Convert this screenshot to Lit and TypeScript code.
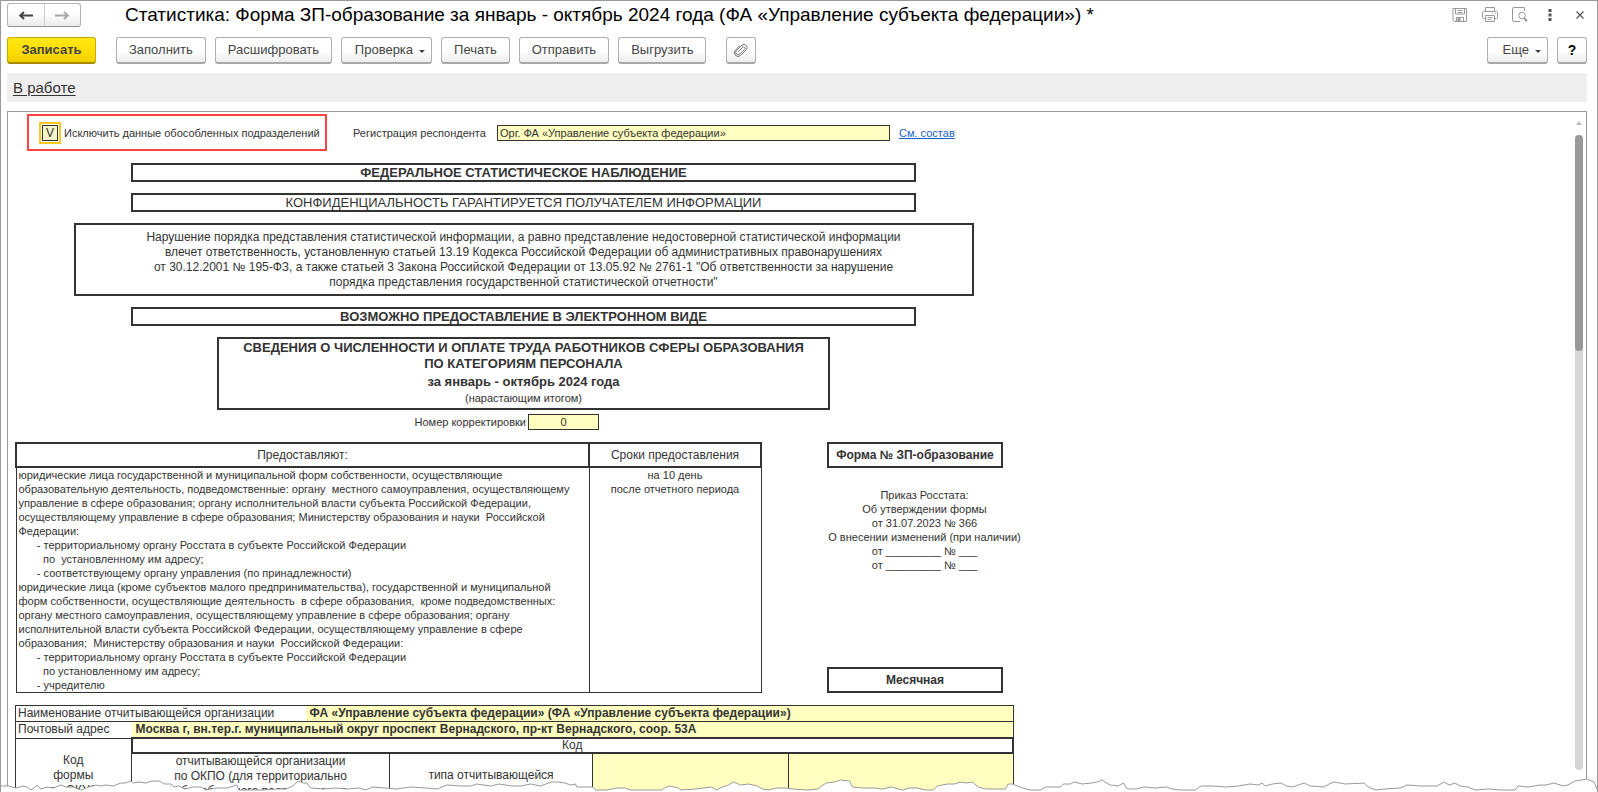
import { LitElement, html, css, svg } from "lit";
import { customElement, state } from "lit/decorators.js";

const TEAR =
  "0,7 8,7 15,9 22,7 26,8 30,11 33,9 36,6 40,10 46,8 52,9 60,6 65,8 72,8 80,11 88,8 95,6 99,7 105,6 112,7 120,4 124,4 130,2 132,4 138,3 145,4 151,2 158,2 164,5 170,5 173,8 178,7 184,10 192,8 200,8 205,11 215,9 226,9 236,6 238,11 262,11 275,10 285,10 292,7 297,2 303,4 306,4 310,9 322,10 335,9 346,10 358,9 365,11 372,8 384,9 395,10 410,8 425,9 437,10 446,6 460,7 470,7 476,5 483,6 490,7 498,5 505,6 512,7 520,7 530,5 540,7 545,5 551,3 558,3 564,4 570,6 575,5 576,8 592,8 595,11 606,11 616,9 624,9 630,11 661,11 664,9 669,7 678,9 680,11 695,10 703,9 711,8 716,11 722,8 728,6 733,3 740,6 748,5 757,7 762,10 768,11 776,9 785,9 792,10 807,11 818,10 821,7 826,4 834,3 840,1 849,2 852,8 862,9 874,9 882,10 891,8 902,11 909,9 917,9 925,11 933,11 937,7 947,5 954,5 960,3 966,4 972,3 978,8 985,10 993,10 1005,10 1008,5 1012,5 1022,9 1030,11 1040,11 1045,8 1053,8 1060,8 1063,5 1070,5 1074,3 1082,5 1091,4 1097,3 1102,1 1106,4 1110,6 1118,7 1123,4 1126,9 1129,10 1136,10 1144,8 1155,9 1166,8 1172,10 1180,11 1195,11 1201,7 1212,7 1226,8 1238,7 1250,5 1258,6 1262,4 1265,7 1272,5 1281,4 1286,7 1292,8 1298,6 1304,4 1310,7 1324,8 1329,5 1334,3 1345,5 1364,4 1367,7 1370,9 1376,11 1384,10 1400,9 1407,6 1420,7 1437,7 1444,3 1449,6 1455,4 1460,7 1468,8 1475,11 1489,10 1500,11 1515,11 1518,7 1528,8 1540,6 1546,6 1554,4 1563,7 1568,6 1575,2 1587,0 1594,3 1597,10";

const PROVIDERS = [
  "юридические лица государственной и муниципальной форм собственности, осуществляющие",
  "образовательную деятельность, подведомственные: органу  местного самоуправления, осуществляющему",
  "управление в сфере образования; органу исполнительной власти субъекта Российской Федерации,",
  "осуществляющему управление в сфере образования; Министерству образования и науки  Российской",
  "Федерации:",
  "      - территориальному органу Росстата в субъекте Российской Федерации",
  "        по  установленному им адресу;",
  "      - соответствующему органу управления (по принадлежности)",
  "юридические лица (кроме субъектов малого предпринимательства), государственной и муниципальной",
  "форм собственности, осуществляющие деятельность  в сфере образования,  кроме подведомственных:",
  "органу местного самоуправления, осуществляющему управление в сфере образования; органу",
  "исполнительной власти субъекта Российской Федерации, осуществляющему управление в сфере",
  "образования;  Министерству образования и науки  Российской Федерации:",
  "      - территориальному органу Росстата в субъекте Российской Федерации",
  "        по установленному им адресу;",
  "      - учредителю",
].join("\n");

const NOTICE = [
  "Нарушение порядка представления статистической информации, а равно представление недостоверной статистической информации",
  "влечет ответственность, установленную статьей 13.19 Кодекса Российской Федерации об административных правонарушениях",
  "от 30.12.2001 № 195-ФЗ, а также статьей 3 Закона Российской Федерации от 13.05.92 № 2761-1 \"Об ответственности за нарушение",
  "порядка представления государственной статистической отчетности\"",
].join("\n");

const ORDER = [
  "Приказ Росстата:",
  "Об утверждении формы",
  "от 31.07.2023 № 366",
  "О внесении изменений (при наличии)",
  "от _________ № ___",
  "от _________ № ___",
].join("\n");

const icon = (body: unknown, w = 18, h = 18) =>
  html`<svg width=${w} height=${h} viewBox="0 0 ${w} ${h}" fill="none" stroke="currentColor" aria-hidden="true">${body}</svg>`;

@customElement("title-bar")
export class TitleBar extends LitElement {
  static styles = css`
    :host { display: flex; align-items: center; height: 28px; }
    .nav { display: flex; flex: none; width: 74px; height: 24px; box-sizing: border-box; border: 1px solid #b4b4b4; border-bottom-color: #909090; border-radius: 3px; background: linear-gradient(#fff 40%, #ececec); }
    .nav button { flex: 1; border: 0; padding: 0; background: none; color: #444; display: grid; place-items: center; }
    .nav button + button { border-left: 1px solid #ccc; color: #aaa; }
    h1 { flex: 1; margin: 0 0 0 44px; font: 400 19px/24px "Liberation Sans", Arial, sans-serif; color: #000; white-space: nowrap; }
    .tools { display: flex; gap: 12px; color: #999; margin-right: -2px; }
    .tools button { width: 18px; height: 24px; padding: 0; border: 0; background: none; color: inherit; display: grid; place-items: center; }
    .tools .dark { color: #555; }
  `;
  render() {
    return html`
      <div class="nav">
        <button aria-label="Назад">${icon(svg`<path d="M2 5.5h13M6 2 2.2 5.5 6 9" stroke-width="2"/>`, 16, 11)}</button>
        <button aria-label="Вперед">${icon(svg`<path d="M1 5.5h13M10 2l3.8 3.5L10 9" stroke-width="2"/>`, 16, 11)}</button>
      </div>
      <h1>Статистика: Форма ЗП-образование за январь - октябрь 2024 года (ФА «Управление субъекта федерации») *</h1>
      <div class="tools">
        <button aria-label="Сохранить">${icon(svg`<path d="M2 2.5h13.5v13H3.5l-1.500-1.500zM4.500 2.500v5.500h9V2.500M6.500 4.500h5M6.500 6.500h5M5.500 15.500v-4h7v4"/><path d="M7 12.500h2v3H7z" fill="currentColor"/>`)}</button>
        <button aria-label="Печать">${icon(svg`<path d="M4.500 5.500v-4h9v4M4 12.500H2.500a1 1 0 0 1-1-1v-5a1 1 0 0 1 1-1h13a1 1 0 0 1 1 1v5a1 1 0 0 1-1 1H14M4.500 9.500h9v6h-9zM6.500 11.500h5M6.500 13.500h4M11 7.500h1M14 7.500h1"/>`)}</button>
        <button aria-label="Просмотр">${icon(svg`<path d="M9 15.500H3a1.500 1.500 0 0 1-1.500-1.500V3A1.500 1.500 0 0 1 3 1.500h10.500V5"/><circle cx="11" cy="9.500" r="3.300"/><path d="m13 12 3 3.200" stroke-width="2"/>`)}</button>
        <button class="dark" aria-label="Меню">${icon(svg`<path d="M7.500 3h3v3h-3zM7.500 7.500h3v3h-3zM7.500 12h3v3h-3z" fill="currentColor" stroke="none"/>`)}</button>
        <button class="dark" aria-label="Закрыть">${icon(svg`<path d="m5.500 5.500 7 7M12.500 5.500l-7 7" stroke-width="1.200"/>`)}</button>
      </div>
    `;
  }
}

@customElement("command-bar")
export class CommandBar extends LitElement {
  static styles = css`
    :host { display: flex; align-items: center; gap: 9px; }
    button { height: 27px; box-sizing: border-box; padding: 0 12px; border: 1px solid #b0b0b0; border-bottom: 2px solid #a8a8a8; border-radius: 3px; background: linear-gradient(#fff 50%, #ededed); color: #444; font: 13px/16px "Liberation Sans", Arial, sans-serif; white-space: nowrap; }
    .main { min-width: 89px; margin-right: 11px; border-color: #c9ab00; border-bottom-color: #a58c00; background: linear-gradient(#ffe716, #fcdc00 60%, #f0cf00); font-weight: 700; }
    .menu { display: flex; align-items: center; justify-content: flex-end; gap: 6px; min-width: 61px; padding-right: 6px; }
    .menu::after { content: ""; border: 3px solid transparent; border-top-color: #444; border-bottom: 0; margin-top: 2px; }
    .check { min-width: 91px; }
    .clip { width: 30px; padding: 0; margin-left: 11px; display: grid; place-items: center; color: #777; }
    .space { flex: 1; }
    .help { width: 30px; padding: 0; color: #000; font-weight: 700; font-size: 14px; }
  `;
  render() {
    return html`
      <button class="main">Записать</button>
      <button>Заполнить</button>
      <button>Расшифровать</button>
      <button class="menu check">Проверка</button>
      <button>Печать</button>
      <button>Отправить</button>
      <button>Выгрузить</button>
      <button class="clip" aria-label="Вложения">${icon(svg`<path d="M5.500 9.500 9.800 5.200a1.300 1.300 0 0 1 1.900 1.900L6.800 12a2.400 2.400 0 0 1-3.400-3.400l5.500-5.500a3.200 3.200 0 0 1 4.500 4.500l-5.700 5.700a3.700 3.700 0 0 1-5.300-5.200L6.500 4"/>`, 16, 16)}</button>
      <span class="space"></span>
      <button class="menu">Еще</button>
      <button class="help" aria-label="Справка">?</button>
    `;
  }
}

@customElement("report-sheet")
export class ReportSheet extends LitElement {
  @state() private excluded = true;

  static styles = css`
    :host { display: block; color: #333; font: 11px/14px "Liberation Sans", Arial, sans-serif; }
    input { box-sizing: border-box; margin: 0; border: 1px solid #333; border-radius: 0; background: #ffffc0; color: #333; font: inherit; outline: 0; }
    .top { display: flex; align-items: center; height: 37px; margin: 2px 0 12px 19px; }
    .exclude { display: flex; align-items: center; gap: 3px; box-sizing: border-box; width: 300px; height: 37px; padding-left: 10px; border: 2px solid #f44; }
    .exclude input { appearance: none; width: 22px; height: 22px; border: 2px solid #ffc81e; padding: 1px; background: #fff; }
    .exclude input::before { content: ""; box-sizing: border-box; display: block; width: 16px; height: 16px; border: 1px solid #333; background: #f5f5c8; text-align: center; font-size: 12px; line-height: 14px; }
    .exclude input:checked::before { content: "V"; }
    .reg { margin-left: 26px; width: 144px; }
    .org { width: 393px; height: 16px; padding: 0 2px; }
    .link { margin-left: 9px; color: #1a5fc4; }
    .head { display: flex; flex-direction: column; align-items: center; gap: 11px; max-width: 1031px; text-align: center; }
    .box { box-sizing: border-box; border: 2px solid #333; max-width: 100%; }
    .banner { width: 785px; font-size: 13px; line-height: 15px; }
    .bold { font-weight: 700; }
    .notice { width: 900px; padding: 5px 0 4px; font-size: 12px; line-height: 15px; white-space: pre-line; }
    .heading { width: 613px; padding: 1px 0 3px; }
    .heading h2 { margin: 0; font-size: 13px; line-height: 16px; }
    .heading .period { font-size: 13px; line-height: 19px; font-weight: 700; }
    .number { display: grid; grid-template-columns: 518px 71px; gap: 2px; align-items: center; margin: 4px 0 12px; }
    .number label { text-align: right; }
    .number input { height: 16px; text-align: center; padding: 0; }
    .middle { display: flex; gap: 65px; margin-left: 7px; }
    table { border-collapse: collapse; table-layout: fixed; }
    th { font-weight: 400; padding: 0; }
    td { padding: 0 2px; vertical-align: top; }
    .terms { width: 747px; }
    .terms th { height: 22px; border: 2px solid #333; font-size: 12px; }
    .terms td { padding: 0 2px; border: 1px solid #333; white-space: pre; }
    .terms .when { text-align: center; }
    .form { display: flex; flex-direction: column; width: 176px; }
    .form .box { font: 700 12px/22px "Liberation Sans", Arial, sans-serif; text-align: center; height: 26px; }
    .order { flex: 1; align-self: center; margin-top: 20px; padding-left: 19px; text-align: center; white-space: pre; }
    .codes { width: 999px; margin: 12px 0 0 7px; font-size: 12px; line-height: 15px; }
    .codes td { border: 1px solid #333; }
    .codes .value { background: #ffffc0; font-weight: 700; border-left: 0; padding-left: 4px; }
    .codes .name { border-right: 0; }
    .codes .fill { background: #ffffc0; }
    .codes th { border: 2px solid #333; line-height: 13px; }
    .codes .center { text-align: center; white-space: pre; }
    .codes .mid { padding-top: 14px; }
  `;

  render() {
    return html`
      <div class="top">
        <label class="exclude">
          <input type="checkbox" .checked=${this.excluded} @change=${(e: Event) => (this.excluded = (e.target as HTMLInputElement).checked)} />
          <span>Исключить данные обособленных подразделений</span>
        </label>
        <label class="reg" for="org">Регистрация респондента</label>
        <input class="org" id="org" value="Орг. ФА «Управление субъекта федерации»" />
        <a class="link" href="#members">См. состав</a>
      </div>
      <div class="head">
        <div class="box banner bold">ФЕДЕРАЛЬНОЕ СТАТИСТИЧЕСКОЕ НАБЛЮДЕНИЕ</div>
        <div class="box banner">КОНФИДЕНЦИАЛЬНОСТЬ ГАРАНТИРУЕТСЯ ПОЛУЧАТЕЛЕМ ИНФОРМАЦИИ</div>
        <div class="box notice">${NOTICE}</div>
        <div class="box banner bold">ВОЗМОЖНО ПРЕДОСТАВЛЕНИЕ В ЭЛЕКТРОННОМ ВИДЕ</div>
        <div class="box heading">
          <h2>СВЕДЕНИЯ О ЧИСЛЕННОСТИ И ОПЛАТЕ ТРУДА РАБОТНИКОВ СФЕРЫ ОБРАЗОВАНИЯ<br />ПО КАТЕГОРИЯМ ПЕРСОНАЛА</h2>
          <div class="period">за январь - октябрь 2024 года</div>
          <div>(нарастающим итогом)</div>
        </div>
      </div>
      <div class="number">
        <label for="correction">Номер корректировки</label>
        <input id="correction" value="0" />
      </div>
      <div class="middle">
        <table class="terms">
          <colgroup><col style="width:573px" /><col /></colgroup>
          <thead><tr><th scope="col">Предоставляют:</th><th scope="col">Сроки предоставления</th></tr></thead>
          <tbody><tr><td>${PROVIDERS}</td><td class="when">${"на 10 день\nпосле отчетного периода"}</td></tr></tbody>
        </table>
        <div class="form">
          <div class="box">Форма № ЗП-образование</div>
          <div class="order">${ORDER}</div>
          <div class="box">Месячная</div>
        </div>
      </div>
      <table class="codes">
        <colgroup>
          <col style="width:116px" /><col style="width:174px" /><col style="width:84px" /><col style="width:203px" /><col style="width:196px" /><col />
        </colgroup>
        <tbody>
          <tr><td class="name" colspan="2">Наименование отчитывающейся организации</td><td class="value" colspan="4">ФА «Управление субъекта федерации» (ФА «Управление субъекта федерации»)</td></tr>
          <tr><td class="name">Почтовый адрес</td><td class="value" colspan="5">Москва г, вн.тер.г. муниципальный округ проспект Вернадского, пр-кт Вернадского, соор. 53А</td></tr>
          <tr><td class="center mid" rowspan="2">${"Код\nформы\nпо ОКУД"}</td><th colspan="5">Код</th></tr>
          <tr>
            <td class="center" colspan="2">${"отчитывающейся организации\nпо ОКПО (для территориально\nобособленного подразделения"}</td>
            <td class="center mid">${"типа отчитывающейся\nорганизации"}</td>
            <td class="fill"></td>
            <td class="fill"></td>
          </tr>
        </tbody>
      </table>
    `;
  }
}

@customElement("app-root")
export class AppRoot extends LitElement {
  static styles = css`
    :host { display: block; position: relative; box-sizing: border-box; height: 100vh; overflow: hidden; border: 1px solid #999; border-bottom: 0; background: #fff; font-family: "Liberation Sans", Arial, sans-serif; }
    .window { display: flex; flex-direction: column; box-sizing: border-box; height: 100%; padding: 0 10px 0 6px; }
    command-bar { margin-top: 8px; }
    .status { margin: 9px 0; padding: 0 6px; background: #efefef; font-size: 15px; line-height: 29px; }
    .status a { color: #333; text-underline-offset: 2px; }
    .panel { display: flex; flex: 1; min-height: 0; border: 1px solid #999; border-bottom: 0; }
    report-sheet { flex: 1; min-width: 0; overflow: hidden; }
    .scroll { display: flex; flex-direction: column; align-items: center; width: 8px; margin: 9px 3px 22px 0; }
    .scroll::before { content: ""; border: 3px solid transparent; border-top: 0; border-bottom: 4px solid #bbb; }
    .track { flex: 1; width: 8px; margin-top: 10px; border-radius: 4px; background: #d6d6d6; }
    .thumb { height: 34%; border-radius: 4px; background: #999; }
    .tear { position: absolute; left: 0; bottom: 0; display: block; width: 100%; height: 13px; }
  `;
  render() {
    return html`
      <div class="window">
        <title-bar></title-bar>
        <command-bar></command-bar>
        <div class="status"><a href="#status">В работе</a></div>
        <div class="panel">
          <report-sheet></report-sheet>
          <div class="scroll"><div class="track"><div class="thumb"></div></div></div>
        </div>
      </div>
      <svg class="tear" viewBox="0 0 1597 13" preserveAspectRatio="none" aria-hidden="true">
        <polygon points="0,13 ${TEAR} 1597,13" fill="#fff" />
        <polyline points=${TEAR} fill="none" stroke="#999" />
      </svg>
    `;
  }
}
